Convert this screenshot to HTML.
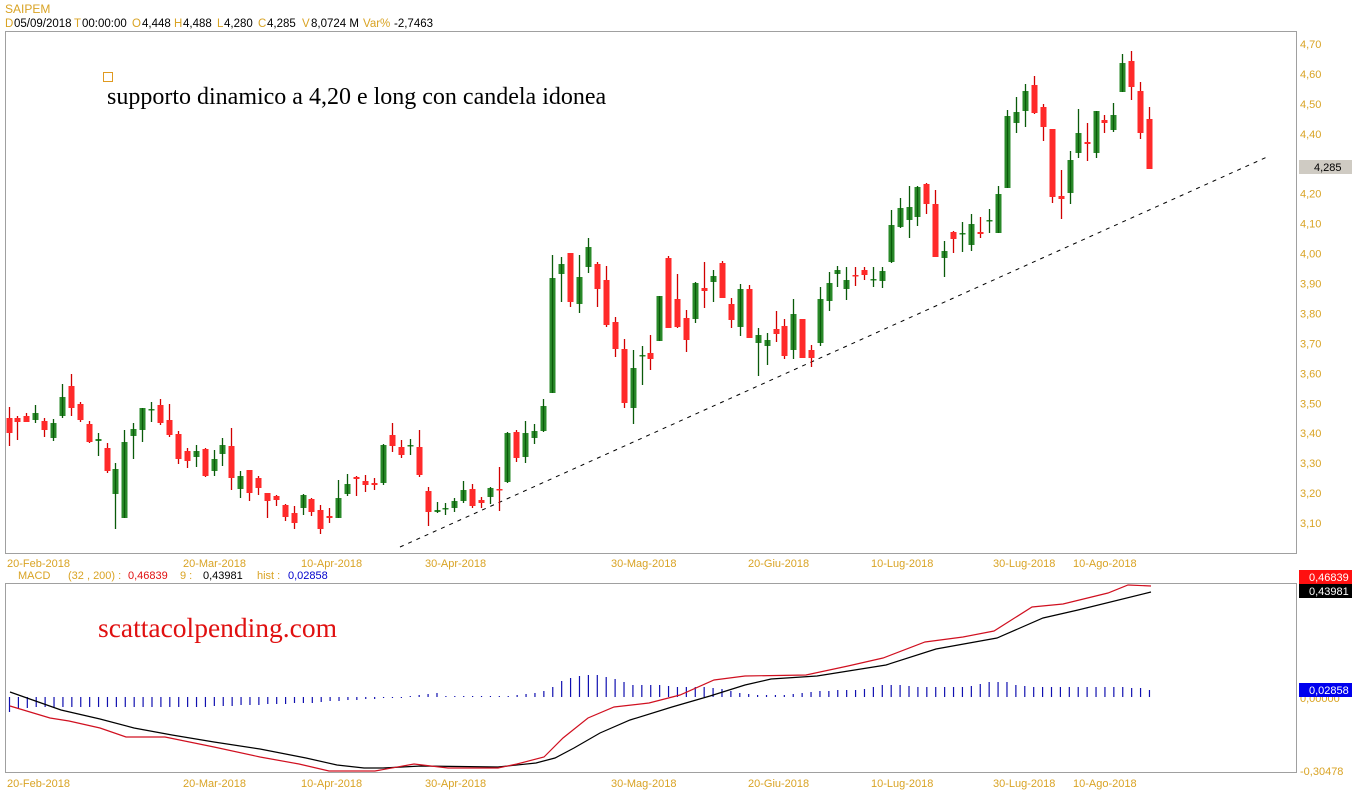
<!DOCTYPE html>
<html><head><meta charset="utf-8"><style>
html,body{margin:0;padding:0;background:#fff;width:1352px;height:800px;overflow:hidden}
svg{display:block;font-family:"Liberation Sans",sans-serif}
</style></head><body>
<svg id="s" width="1352" height="800" xmlns="http://www.w3.org/2000/svg">
<rect x="0" y="0" width="1352" height="800" fill="#fff"/>
<text x="5" y="13" font-size="12" fill="#d9a324">SAIPEM</text>
<g font-size="11.5" fill="#000">
<text x="5" y="27" fill="#d9a324">D</text><text x="14" y="27">05/09/2018</text>
<text x="74" y="27" fill="#d9a324">T</text><text x="82" y="27">00:00:00</text>
<text x="132" y="27" fill="#d9a324">O</text><text x="142" y="27">4,448</text>
<text x="174" y="27" fill="#d9a324">H</text><text x="183" y="27">4,488</text>
<text x="217" y="27" fill="#d9a324">L</text><text x="224" y="27">4,280</text>
<text x="258" y="27" fill="#d9a324">C</text><text x="267" y="27">4,285</text>
<text x="302" y="27" fill="#d9a324">V</text><text x="311" y="27">8,0724 M</text>
<text x="363" y="27" fill="#d9a324">Var%</text><text x="394" y="27">-2,7463</text>
</g>
<rect x="5.5" y="31.5" width="1291" height="522" fill="none" stroke="#a0a0a0"/>
<rect x="5.5" y="583.5" width="1291" height="189" fill="none" stroke="#a0a0a0"/>
<rect x="103.5" y="72.5" width="9" height="9" fill="none" stroke="#e09a20"/>
<text x="107" y="104" font-family="Liberation Serif,serif" font-size="24" fill="#000">supporto dinamico a 4,20 e long con candela idonea</text>
<text x="98" y="637" font-family="Liberation Serif,serif" font-size="27.5" fill="#e01010">scattacolpending.com</text>
<line x1="400" y1="547" x2="1267" y2="157" stroke="#000" stroke-width="1" stroke-dasharray="4,5"/>
<g id="c"></g>
<g id="h"></g>
<g font-size="11" fill="#d9a324" id="ax"></g>
<g font-size="11" fill="#d9a324">
<text x="18" y="579">MACD</text><text x="68" y="579">(32 , 200) :</text>
<text x="128" y="579" fill="#e01010">0,46839</text>
<text x="180" y="579">9 :</text>
<text x="203" y="579" fill="#000">0,43981</text>
<text x="257" y="579">hist :</text>
<text x="288" y="579" fill="#0000cc">0,02858</text>
</g>
<rect x="1299" y="160" width="53" height="14" fill="#cfcbc3"/>
<text x="1314" y="171" font-size="11" fill="#000">4,285</text>
<rect x="1299" y="570" width="53" height="14" fill="#ff1010"/>
<text x="1309" y="581" font-size="11" fill="#fff">0,46839</text>
<rect x="1299" y="584" width="53" height="14" fill="#000"/>
<text x="1309" y="595" font-size="11" fill="#fff">0,43981</text>
<text x="1300" y="702" font-size="11" fill="#d9a324">0,00000</text>
<rect x="1299" y="683" width="53" height="14" fill="#0000ee"/>
<text x="1309" y="694" font-size="11" fill="#fff">0,02858</text>
<text x="1300" y="775" font-size="11" fill="#d9a324">-0,30478</text>
<polyline fill="none" stroke="#000" stroke-width="1.2" points="10,692 61,710 100,719 134,728 172,735 214,742 260,749 306,758 337,765 364,768 383,768 421,766 498,767 536,763 555,758 574,748 600,733 630,720 672,707 710,696 745,685 771,679 817,676 886,665 936,649 997,638 1043,618 1078,610 1151,592"/>
<polyline fill="none" stroke="#d01020" stroke-width="1.2" points="10,706 50,718 69,721 100,728 126,737 165,737 214,747 260,757 299,764 329,771 375,771 414,764 448,768 498,768 517,764 544,757 563,738 588,718 614,707 649,703 680,695 714,680 745,676 806,675 848,666 883,658 925,642 963,637 994,631 1032,607 1063,604 1108,593 1128,585 1151,586"/>
</svg>
<script>
var C=[[9,418,433,407,446,0],[17,418,422,416,440,0],[26,416,422,413,422,0],[35,413,420,405,423,1],[44,421,430,418,437,0],[53,423,438,419,441,1],[62,397,416,384,418,1],[71,386,408,374,416,0],[80,404,420,402,422,0],[89,424,442,421,443,0],[98,439,441,433,456,1],[107,448,471,443,473,0],[115,469,494,463,529,1],[124,442,518,430,518,1],[133,429,436,423,459,1],[142,408,430,408,442,1],[151,409,410,402,422,1],[160,405,423,399,425,0],[169,420,435,404,437,0],[178,434,459,431,464,0],[187,451,461,448,468,0],[196,451,457,445,467,1],[205,449,476,448,477,0],[214,459,471,450,476,1],[222,445,454,438,466,1],[231,446,478,428,490,0],[240,476,489,471,498,1],[249,470,493,470,501,0],[258,478,488,476,495,0],[267,493,501,493,518,0],[276,496,500,495,506,0],[285,505,517,504,521,0],[294,513,523,506,529,0],[303,495,508,494,515,1],[311,499,512,498,516,0],[320,510,529,505,534,0],[329,516,518,508,523,0],[338,498,518,480,518,1],[347,484,494,474,496,1],[356,477,479,476,496,0],[365,481,485,475,492,0],[374,483,485,478,490,0],[383,445,483,444,485,1],[392,435,446,423,452,0],[401,447,455,440,458,0],[410,445,446,439,455,1],[419,447,475,430,477,0],[428,491,512,487,526,0],[437,510,512,502,513,1],[445,508,509,503,515,1],[454,501,508,498,512,1],[463,490,501,481,503,1],[472,489,506,484,508,0],[481,500,503,497,508,0],[490,488,497,487,504,1],[499,489,490,467,511,0],[507,433,482,432,483,1],[516,432,458,430,462,0],[525,433,457,421,463,1],[534,431,438,424,444,1],[543,406,431,399,432,1],[552,278,393,255,393,1],[561,264,274,257,302,1],[570,253,302,253,307,0],[579,277,304,255,313,1],[588,247,267,238,273,1],[597,264,289,262,307,0],[606,280,325,266,327,0],[615,322,349,317,357,0],[624,349,403,339,408,0],[633,368,408,350,424,1],[642,355,356,346,385,1],[650,353,359,335,370,0],[659,296,341,296,341,1],[668,258,328,256,328,0],[677,299,327,274,328,0],[686,318,340,310,352,0],[695,283,319,282,323,1],[704,288,291,262,308,0],[713,276,282,270,302,1],[722,263,298,261,298,0],[731,304,320,298,328,0],[740,289,327,284,336,1],[749,289,338,285,338,0],[758,335,343,328,376,1],[767,340,346,333,365,1],[776,329,334,311,342,0],[784,326,356,319,359,0],[793,314,350,299,359,1],[802,319,358,319,358,0],[811,350,358,345,367,0],[820,299,343,287,346,1],[829,283,301,272,311,1],[837,270,274,266,287,1],[846,280,289,267,300,1],[855,275,276,267,286,0],[864,270,275,267,280,0],[873,279,280,267,287,1],[882,271,281,267,288,1],[891,225,262,210,263,1],[900,208,227,198,228,1],[909,207,220,186,238,1],[917,187,217,186,226,1],[926,184,204,183,214,0],[935,204,257,190,257,0],[944,251,258,241,277,1],[953,232,239,231,253,0],[962,233,234,222,252,1],[971,224,245,214,251,1],[980,232,234,217,238,0],[989,220,221,209,233,1],[998,194,233,186,233,1],[1007,116,188,110,188,1],[1016,112,123,97,133,1],[1025,91,111,84,127,1],[1034,85,113,76,114,0],[1043,107,127,104,141,0],[1052,129,197,129,203,0],[1061,196,199,170,219,0],[1070,160,193,151,204,1],[1078,133,153,109,158,1],[1087,142,144,123,161,0],[1096,111,153,111,158,1],[1104,120,123,115,133,0],[1113,115,130,103,132,1],[1122,63,92,54,92,1],[1131,61,87,51,100,0],[1140,91,133,82,139,0],[1149,119,169,107,169,0]];
var g=document.getElementById('c'),h='';
C.forEach(function(c){var up=c[5],col=up?'#2a8a2a':'#ff2a2a',wk=up?'#0a5a0a':'#d00000';
var t=Math.min(c[1],c[2]),b=Math.max(c[1],c[2]);
h+='<line x1="'+(c[0]+.5)+'" y1="'+c[3]+'" x2="'+(c[0]+.5)+'" y2="'+c[4]+'" stroke="'+wk+'" stroke-width="1.3"/>';
h+='<rect x="'+(c[0]-2.5)+'" y="'+t+'" width="6" height="'+Math.max(b-t,1.5)+'" fill="'+col+'"/>';
if(up)h+='<line x1="'+(c[0]+.5)+'" y1="'+t+'" x2="'+(c[0]+.5)+'" y2="'+(t+Math.max(b-t,1.5))+'" stroke="#0a5a0a" stroke-width="1.3"/>';});
g.innerHTML=h;
var H=[-15,-12,-11];for(var i=0;i<20;i++)H.push(-10);
H=H.concat([-9,-9,-9,-8,-8,-8,-7,-7,-7,-6,-6,-6,-5,-4,-4,-3,-3,-2,-2,-1,-1,-1,1,2,3,4,1,1,1,1,1,1,1,1,2,3,4,6,10,16,19,21,
22,22,20,18,15,12,12,12,12,11,10,10,10,10,9,8,6,4,3,2,2,2,2,3,4,5,6,6,7,7,7,8,10,12,12,12,11,10,10,10,10,10,10,11,13,15,15,15,12,11,10,10,10,10,10,10,10,10,10,10,10,9,9,7]);
h='';H.forEach(function(v,i){var x=9.5+i*8.906;h+='<line x1="'+x+'" y1="697" x2="'+x+'" y2="'+(697-v)+'" stroke="#1010b0" stroke-width="1.2"/>';});
document.getElementById('h').innerHTML=h;
h='';var L=['4,70','4,60','4,50','4,40','4,30','4,20','4,10','4,00','3,90','3,80','3,70','3,60','3,50','3,40','3,30','3,20','3,10'];
L.forEach(function(t,i){var y=44+i*29.94;if(t!='4,30')h+='<text x="1300" y="'+(y+4)+'">'+t+'</text>';});
[['20-Mar-2018',183],['10-Apr-2018',301],['30-Apr-2018',425],['30-Mag-2018',611],['20-Giu-2018',748],['10-Lug-2018',871],['30-Lug-2018',993],['10-Ago-2018',1073]].forEach(function(a){h+='<text x="'+a[1]+'" y="567">'+a[0]+'</text><text x="'+a[1]+'" y="787">'+a[0]+'</text>';});
h+='<text x="7" y="567">20-Feb-2018</text><text x="7" y="787">20-Feb-2018</text>';
document.getElementById('ax').innerHTML=h;
</script>
</body></html>
